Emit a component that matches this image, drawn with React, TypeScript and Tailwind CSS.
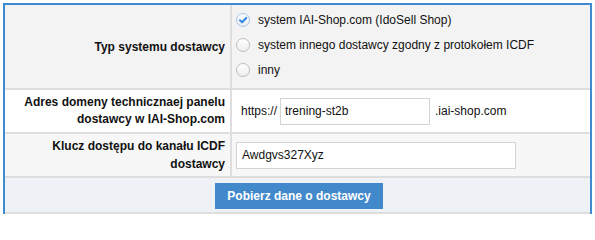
import * as React from "react";

function Radio({ checked }: { checked?: boolean }) {
  return (
    <svg width="14" height="14" viewBox="0 0 14 14" className="shrink-0">
      <defs>
        <linearGradient id="rg" x1="0" y1="0" x2="0" y2="1">
          <stop offset="0" stopColor="#ffffff" />
          <stop offset="1" stopColor="#ededed" />
        </linearGradient>
      </defs>
      <circle
        cx="7"
        cy="7"
        r="6.5"
        fill="url(#rg)"
        stroke={checked ? "#a4c4e8" : "#bdbdbd"}
        strokeWidth="1"
      />
      {checked && (
        <path
          d="M4 7.3 L6.1 9.3 L10.2 4.9"
          fill="none"
          stroke="#3a8ee6"
          strokeWidth="2.2"
          strokeLinecap="round"
          strokeLinejoin="round"
        />
      )}
    </svg>
  );
}

export default function App() {
  const options = [
    { label: "system IAI-Shop.com (IdoSell Shop)", checked: true },
    { label: "system innego dostawcy zgodny z protokołem ICDF" },
    { label: "inny" },
  ];

  return (
    <div className="w-[595px] h-[215px] overflow-hidden bg-white pt-[3px] pl-[3px] font-['Liberation_Sans',Arial,sans-serif] text-[12px] text-[#111]">
      <div className="w-[589px] border-2 border-b-0 border-[#3e8bd0]">
        {/* Typ systemu */}
        <div className="flex bg-[#f3f3f3] border-b-2 border-[#dedede] h-[85px]">
          <div className="w-[225px] flex items-center justify-end pr-[5px] font-bold text-right">
            Typ systemu dostawcy
          </div>
          <div className="flex-1 border-l-2 border-[#dedede] pl-[4px] pt-[2px] flex flex-col">
            {options.map((o) => (
              <label key={o.label} className="h-[25px] flex items-center gap-[8px]">
                <Radio checked={o.checked} />
                <span>{o.label}</span>
              </label>
            ))}
          </div>
        </div>

        {/* Adres domeny */}
        <div className="flex bg-white border-b-2 border-[#dedede] h-[44px]">
          <div className="w-[225px] flex items-center justify-end pr-[5px] font-bold text-right leading-[17px]">
            Adres domeny technicznaej panelu
            <br />
            dostawcy w IAI-Shop.com
          </div>
          <div className="flex-1 border-l-2 border-[#dedede] pl-[4px] flex items-center">
            <span className="ml-[5px] mr-[3px]">https://</span>
            <input
              defaultValue="trening-st2b"
              className="w-[150px] h-[27px] border border-[#d4d4d4] px-[4px] bg-white outline-none"
            />
            <span className="ml-[5px]">.iai-shop.com</span>
          </div>
        </div>

        {/* Klucz dostepu */}
        <div className="flex bg-[#f7f7f7] border-b-2 border-[#dedede] h-[44px]">
          <div className="w-[225px] flex items-center justify-end pr-[5px] font-bold text-right leading-[18px]">
            Klucz dostępu do kanału ICDF
            <br />
            dostawcy
          </div>
          <div className="flex-1 border-l-2 border-[#dedede] pl-[4px] flex items-center">
            <input
              defaultValue="Awdgvs327Xyz"
              className="w-[280px] h-[27px] border border-[#d4d4d4] px-[5px] bg-white outline-none"
            />
          </div>
        </div>

        {/* Akcja */}
        <div className="flex justify-center bg-[#eef2f7] border-b-2 border-[#dedede] h-[36px] pt-[5px]">
          <button className="h-[26px] px-[12px] bg-[#4289cb] text-white font-bold text-[12px] ml-[3px]">
            Pobierz dane o dostawcy
          </button>
        </div>
      </div>
    </div>
  );
}
